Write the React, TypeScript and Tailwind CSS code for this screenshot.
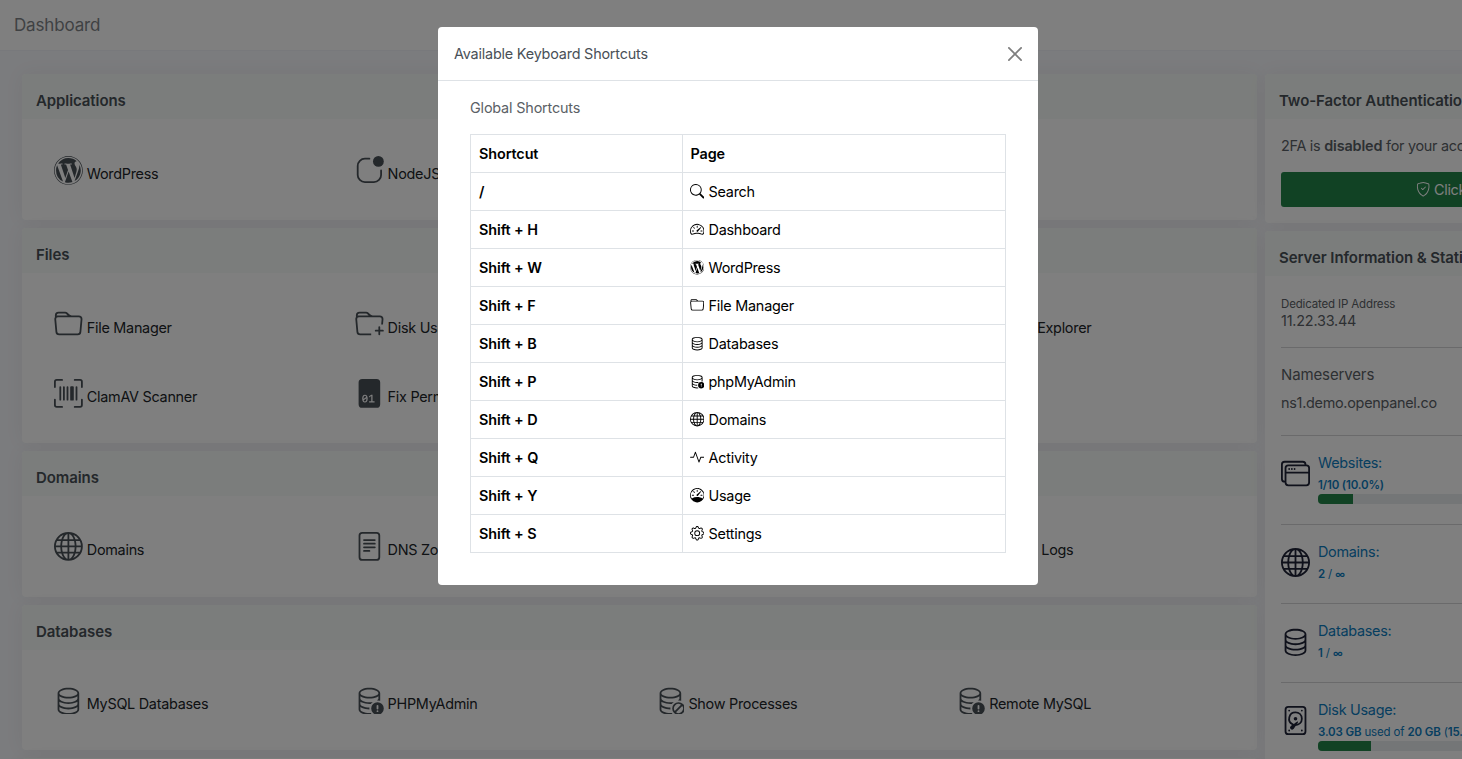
import type { ReactNode } from "react";
import type { IconType } from "react-icons";
import {
  BsActivity,
  BsAppIndicator,
  BsDatabase,
  BsDatabaseExclamation,
  BsDatabaseSlash,
  BsDeviceHdd,
  BsFileBinaryFill,
  BsFileText,
  BsFolder,
  BsFolderPlus,
  BsGear,
  BsGlobe,
  BsSearch,
  BsShieldCheck,
  BsSpeedometer,
  BsSpeedometer2,
  BsUpcScan,
  BsWindowStack,
  BsWordpress,
} from "react-icons/bs";

type Item = { icon: IconType; label: string } | null;

const sections: { title: string; className: string; body: string; items: Item[] }[] = [
  {
    title: "Applications",
    className: "h-[146px]",
    body: "pt-[33px]",
    items: [
      { icon: BsWordpress, label: "WordPress" },
      { icon: BsAppIndicator, label: "NodeJS" },
    ],
  },
  {
    title: "Files",
    className: "h-[215px]",
    body: "pt-[33px]",
    items: [
      { icon: BsFolder, label: "File Manager" },
      { icon: BsFolderPlus, label: "Disk Usage" },
      null,
      { icon: BsFolder, label: "Inodes Explorer" },
      { icon: BsUpcScan, label: "ClamAV Scanner" },
      { icon: BsFileBinaryFill, label: "Fix Permissions" },
    ],
  },
  {
    title: "Domains",
    className: "h-[145.5px]",
    body: "pt-[32px]",
    items: [
      { icon: BsGlobe, label: "Domains" },
      { icon: BsFileText, label: "DNS Zone" },
      null,
      { icon: BsFileText, label: "Access Logs" },
    ],
  },
  {
    title: "Databases",
    className: "h-[145.5px]",
    body: "pt-[32px]",
    items: [
      { icon: BsDatabase, label: "MySQL Databases" },
      { icon: BsDatabaseExclamation, label: "PHPMyAdmin" },
      { icon: BsDatabaseSlash, label: "Show Processes" },
      { icon: BsDatabaseExclamation, label: "Remote MySQL" },
    ],
  },
];

const shortcuts: { keys: string; icon: IconType; page: string }[] = [
  { keys: "/", icon: BsSearch, page: "Search" },
  { keys: "Shift + H", icon: BsSpeedometer2, page: "Dashboard" },
  { keys: "Shift + W", icon: BsWordpress, page: "WordPress" },
  { keys: "Shift + F", icon: BsFolder, page: "File Manager" },
  { keys: "Shift + B", icon: BsDatabase, page: "Databases" },
  { keys: "Shift + P", icon: BsDatabaseExclamation, page: "phpMyAdmin" },
  { keys: "Shift + D", icon: BsGlobe, page: "Domains" },
  { keys: "Shift + Q", icon: BsActivity, page: "Activity" },
  { keys: "Shift + Y", icon: BsSpeedometer, page: "Usage" },
  { keys: "Shift + S", icon: BsGear, page: "Settings" },
];

function Card({ title, className, children }: { title?: string; className: string; children?: ReactNode }) {
  return (
    <section className={`shrink-0 rounded bg-white shadow-[0_0_20px_rgba(50,44,20,0.055)] ${className}`}>
      <h2 className="flex h-[45px] items-center rounded-t bg-[#f7fbf8] px-3.5 pt-[9px] text-[15px] font-semibold tracking-[-0.09px] text-[#495057]">
        {title}
      </h2>
      {children}
    </section>
  );
}

function Strong({ children }: { children: ReactNode }) {
  return <b className="font-semibold">{children}</b>;
}

function Unlimited() {
  return <b className="text-[10px] font-semibold">∞</b>;
}

function Stat({
  icon: Icon,
  title,
  detail,
  percent,
  className,
}: {
  icon: IconType;
  title: string;
  detail: ReactNode;
  percent?: number;
  className: string;
}) {
  return (
    <div className={`flex items-start gap-2 border-t border-[#d4d5d7] pt-4 text-[#0d7cc0] ${className}`}>
      <Icon className="mt-[7px] size-[29px] shrink-0 text-[#1e2236]" />
      <div className="min-w-0 flex-1">
        <div className="text-[14.4px] leading-[22px]">{title}</div>
        <div className="mt-px text-[11.5px] leading-[21px] tracking-[-0.15px]">{detail}</div>
        {percent !== undefined && (
          <div className="-mt-[2px] h-[10px] overflow-hidden rounded bg-[#e9ecef]">
            <div className="h-full bg-[#228448]" style={{ width: `${percent}%` }} />
          </div>
        )}
      </div>
    </div>
  );
}

export default function App() {
  return (
    <div className="h-[759px] w-[1462px] overflow-hidden bg-[#f7f8fc] font-['Inter',sans-serif] text-[14.4px] leading-[22px] tracking-[-0.27px] text-[#5b6166]">
      <header className="flex h-[51px] items-center border-b border-[#f0f2f8] bg-white px-3.5">
        <h1 className="text-[17px] tracking-[-0.16px] text-[#7f8387]">Dashboard</h1>
      </header>

      <main className="flex gap-2 pt-[23px] pl-[22px]">
        <div className="flex w-[1235px] shrink-0 flex-col gap-2">
          {sections.map((s) => (
            <Card key={s.title} title={s.title} className={s.className}>
              <div className={`grid auto-rows-[69px] grid-cols-[repeat(4,300.8px)] pl-8 ${s.body}`}>
                {s.items.map((item, i) =>
                  item ? (
                    <div key={i} className="flex h-8 items-start gap-1 text-[#212529]">
                      <item.icon className="mt-[4px] size-[28.8px] text-[#495057]" />
                      <span className="mt-[11px]">{item.label}</span>
                    </div>
                  ) : (
                    <div key={i} />
                  ),
                )}
              </div>
            </Card>
          ))}
          <Card className="h-[146px]" />
        </div>

        <aside className="flex w-[413px] shrink-0 flex-col gap-2">
          <Card title="Two-Factor Authentication" className="h-[149px]">
            <div className="px-4 pt-4">
              <p>
                2FA is <b className="font-semibold tracking-[-0.14px]">disabled</b> for your account.
              </p>
              <button className="mt-[15px] flex h-[35px] w-full items-center justify-center gap-1 rounded-[3px] bg-[#228448] pl-[3px] text-white">
                <BsShieldCheck className="size-[14.4px]" />
                Click to enable
              </button>
            </div>
          </Card>
          <Card title="Server Information & Statistics" className="h-[640px]">
            <div className="px-4 pt-[20px]">
              <div className="text-[11.5px] leading-[16px] tracking-[-0.15px]">Dedicated IP Address</div>
              <div className="tracking-[-0.2px] leading-[18px]">11.22.33.44</div>
              <div className="mt-[17px] h-[88px] border-t border-[#d4d5d7] pt-4">
                <div className="text-[15px] tracking-[-0.13px]">Nameservers</div>
                <div className="mt-1.5">ns1.demo.openpanel.co</div>
              </div>
              <Stat
                className="h-[89px]"
                icon={BsWindowStack}
                title="Websites:"
                detail={<Strong>1/10 (10.0%)</Strong>}
                percent={10.2}
              />
              <Stat
                className="h-[79px]"
                icon={BsGlobe}
                title="Domains:"
                detail={
                  <>
                    <Strong>2</Strong> / <Unlimited />
                  </>
                }
              />
              <Stat
                className="h-[79px]"
                icon={BsDatabase}
                title="Databases:"
                detail={
                  <>
                    <Strong>1</Strong> / <Unlimited />
                  </>
                }
              />
              <Stat
                className="h-[89px]"
                icon={BsDeviceHdd}
                title="Disk Usage:"
                detail={
                  <>
                    <Strong>3.03 GB</Strong> used of <Strong>20 GB</Strong> (<Strong>15.15%</Strong>)
                  </>
                }
                percent={15.4}
              />
            </div>
          </Card>
        </aside>
      </main>

      <div className="fixed inset-0 flex items-start justify-center bg-black/50 pt-[27px] pl-[14px]">
        <div role="dialog" className="h-[558px] w-[600px] rounded bg-white">
          <div className="flex h-[54px] items-center justify-between border-b border-[#dee2e6] px-4">
            <h2 className="tracking-[-0.2px] text-[#495057]">Available Keyboard Shortcuts</h2>
            <button aria-label="Close" className="text-[#7f7f7f]">
              <svg viewBox="0 0 16 16" className="size-[14px]" fill="currentColor">
                <path d="M.293.293a1 1 0 0 1 1.414 0L8 6.586 14.293.293a1 1 0 1 1 1.414 1.414L9.414 8l6.293 6.293a1 1 0 0 1-1.414 1.414L8 9.414l-6.293 6.293a1 1 0 0 1-1.414-1.414L6.586 8 .293 1.707a1 1 0 0 1 0-1.414z" />
              </svg>
            </button>
          </div>
          <div className="px-8 pt-4">
            <h3 className="tracking-[-0.17px] text-[#5b6166]">Global Shortcuts</h3>
            <table className="mt-[15px] w-[536px] table-fixed border-collapse text-black">
              <thead>
                <tr className="h-[38px] tracking-[-0.1px]">
                  <th className="w-[212px] border border-[#dee2e6] px-2 text-left font-semibold">Shortcut</th>
                  <th className="border border-[#dee2e6] px-[7.5px] text-left font-semibold">Page</th>
                </tr>
              </thead>
              <tbody>
                {shortcuts.map((s) => (
                  <tr key={s.keys} className="h-[38px]">
                    <td className="border border-[#dee2e6] px-2 font-semibold tracking-[-0.1px]">{s.keys}</td>
                    <td className="border border-[#dee2e6] px-[7px] tracking-[-0.23px]">
                      <div className="flex items-center gap-[4.1px]">
                        <s.icon className="size-[14.4px]" />
                        {s.page}
                      </div>
                    </td>
                  </tr>
                ))}
              </tbody>
            </table>
          </div>
        </div>
      </div>
    </div>
  );
}
